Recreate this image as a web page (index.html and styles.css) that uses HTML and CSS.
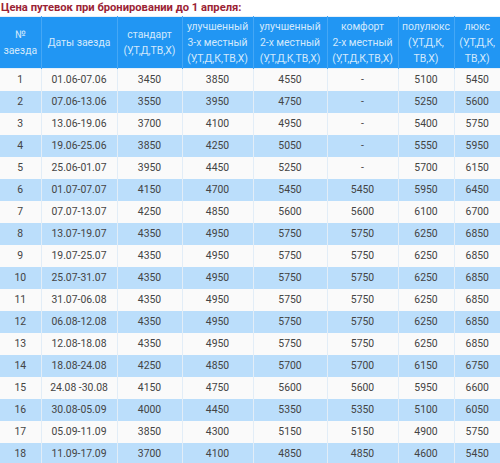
FILE: index.html
```html
<!DOCTYPE html>
<html lang="ru">
<head>
<meta charset="utf-8">
<title>Цена путевок</title>
<link rel="stylesheet" href="styles.css">
</head>
<body>
<p class="title">Цена путевок при бронировании до 1 апреля:</p>
<table class="prices">
<colgroup>
<col class="c1"><col class="c2"><col class="c3"><col class="c4"><col class="c5"><col class="c6"><col class="c7"><col class="c8">
</colgroup>
<thead>
<tr>
<th>№<br>заезда</th>
<th>Даты заезда</th>
<th>стандарт<br>(У,Т,Д,ТВ,Х)</th>
<th>улучшенный<br>3-х местный<br>(У,Т,Д,К,ТВ,Х)</th>
<th>улучшенный<br>2-х местный<br>(У,Т,Д,К,ТВ,Х)</th>
<th>комфорт<br>2-х местный<br>(У,Т,Д,К,ТВ,Х)</th>
<th>полулюкс<br>(У,Т,Д,К,<br>ТВ,Х)</th>
<th>люкс<br>(У,Т,Д,К,<br>ТВ,Х)</th>
</tr>
</thead>
<tbody>
<tr><td>1</td><td>01.06-07.06</td><td>3450</td><td>3850</td><td>4550</td><td>-</td><td>5100</td><td>5450</td></tr>
<tr><td>2</td><td>07.06-13.06</td><td>3550</td><td>3950</td><td>4750</td><td>-</td><td>5250</td><td>5600</td></tr>
<tr><td>3</td><td>13.06-19.06</td><td>3700</td><td>4100</td><td>4950</td><td>-</td><td>5400</td><td>5750</td></tr>
<tr><td>4</td><td>19.06-25.06</td><td>3850</td><td>4250</td><td>5050</td><td>-</td><td>5550</td><td>5950</td></tr>
<tr><td>5</td><td>25.06-01.07</td><td>3950</td><td>4450</td><td>5250</td><td>-</td><td>5700</td><td>6150</td></tr>
<tr><td>6</td><td>01.07-07.07</td><td>4150</td><td>4700</td><td>5450</td><td>5450</td><td>5950</td><td>6450</td></tr>
<tr><td>7</td><td>07.07-13.07</td><td>4250</td><td>4850</td><td>5600</td><td>5600</td><td>6100</td><td>6700</td></tr>
<tr><td>8</td><td>13.07-19.07</td><td>4350</td><td>4950</td><td>5750</td><td>5750</td><td>6250</td><td>6850</td></tr>
<tr><td>9</td><td>19.07-25.07</td><td>4350</td><td>4950</td><td>5750</td><td>5750</td><td>6250</td><td>6850</td></tr>
<tr><td>10</td><td>25.07-31.07</td><td>4350</td><td>4950</td><td>5750</td><td>5750</td><td>6250</td><td>6850</td></tr>
<tr><td>11</td><td>31.07-06.08</td><td>4350</td><td>4950</td><td>5750</td><td>5750</td><td>6250</td><td>6850</td></tr>
<tr><td>12</td><td>06.08-12.08</td><td>4350</td><td>4950</td><td>5750</td><td>5750</td><td>6250</td><td>6850</td></tr>
<tr><td>13</td><td>12.08-18.08</td><td>4350</td><td>4950</td><td>5750</td><td>5750</td><td>6250</td><td>6850</td></tr>
<tr><td>14</td><td>18.08-24.08</td><td>4250</td><td>4850</td><td>5700</td><td>5700</td><td>6150</td><td>6750</td></tr>
<tr><td>15</td><td>24.08 -30.08</td><td>4150</td><td>4750</td><td>5600</td><td>5600</td><td>5950</td><td>6600</td></tr>
<tr><td>16</td><td>30.08-05.09</td><td>4000</td><td>4450</td><td>5350</td><td>5350</td><td>5100</td><td>6050</td></tr>
<tr><td>17</td><td>05.09-11.09</td><td>3850</td><td>4300</td><td>5150</td><td>5150</td><td>4900</td><td>5750</td></tr>
<tr><td>18</td><td>11.09-17.09</td><td>3700</td><td>4100</td><td>4850</td><td>4850</td><td>4600</td><td>5450</td></tr>
</tbody>
</table>
</body>
</html>
```
FILE: styles.css
```css
html, body {
  margin: 0;
  padding: 0;
  background: #ffffff;
}
body {
  font-family: Roboto, "Liberation Sans", sans-serif;
}
.title {
  margin: 0;
  padding: 1px 0 0 1px;
  height: 15px;
  font-size: 11.2px;
  line-height: 14px;
  font-weight: bold;
  color: #9b2335;
}
.prices {
  width: 500px;
  border-collapse: collapse;
  table-layout: fixed;
  font-size: 10.4px;
  border-top: 1px solid #e6f0f9;
}
.c1 { width: 41px; }
.c2 { width: 76px; }
.c3 { width: 65px; }
.c4 { width: 71px; }
.c5 { width: 74px; }
.c6 { width: 71px; }
.c7 { width: 56px; }
.c8 { width: 46px; }
.prices th {
  background: #2196f3;
  color: #d3e9fc;
  font-weight: normal;
  line-height: 16px;
  height: 52px;
  padding: 0;
  box-sizing: border-box;
  border-left: 1px solid #45a7f5;
  text-align: center;
  vertical-align: middle;
  white-space: nowrap;
}
.prices th:first-child { border-left: none; }
.prices td {
  height: 22px;
  padding: 0;
  box-sizing: border-box;
  line-height: 16px;
  text-align: center;
  color: #444444;
  border-left: 1px solid #e2edf7;
  white-space: nowrap;
}
.prices td:first-child { border-left: none; }
.prices tbody tr:nth-child(odd) td { background: #fafafa; }
.prices tbody tr:nth-child(even) td { background: #bbdefb; }
.prices tbody tr:first-child td { border-top: 1px solid #e6f0f9; }
```
